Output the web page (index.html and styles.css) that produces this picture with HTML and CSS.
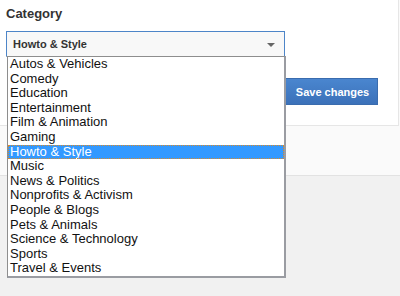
FILE: index.html
```html
<!DOCTYPE HTML>
<html>
<head>
<title>Category</title>
<link rel="stylesheet" href="styles.css">
</head>
<body>
<div class="page">
    <div class="card">
        <div class="label">Category</div>
        <div class="field">
            <div class="select">
                <span>Howto &amp; Style</span>
                <span class="arrow"></span>
            </div>
            <ul class="options">
                <li>Autos &amp; Vehicles</li>
                <li>Comedy</li>
                <li>Education</li>
                <li>Entertainment</li>
                <li>Film &amp; Animation</li>
                <li>Gaming</li>
                <li class="selected">Howto &amp; Style</li>
                <li>Music</li>
                <li>News &amp; Politics</li>
                <li>Nonprofits &amp; Activism</li>
                <li>People &amp; Blogs</li>
                <li>Pets &amp; Animals</li>
                <li>Science &amp; Technology</li>
                <li>Sports</li>
                <li>Travel &amp; Events</li>
            </ul>
        </div>
        <div class="actions">
            <button class="save">Save changes</button>
        </div>
    </div>
</div>
<div class="below"></div>
</body>
</html>
```
FILE: styles.css
```css
html, body {
    height: 100%;
}

body {
    margin: 0;
    display: flex;
    flex-direction: column;
    background: #f1f1f1;
    font-family: "Liberation Sans", Arial, sans-serif;
}

.page {
    position: relative;
    z-index: 1;
    flex: none;
    height: 175px;
    background: #fafafa;
    border-bottom: 1px solid #e2e2e2;
}

.below {
    flex: 1;
    background: #f1f1f1;
}

.card {
    box-sizing: border-box;
    width: 399px;
    height: 126px;
    padding: 5px 0 0 6px;
    background: #fff;
    border-right: 1px solid #e6e6e6;
    border-bottom: 1px solid #e6e6e6;
}

.label {
    font-size: 13px;
    font-weight: bold;
    color: #333;
    line-height: 16px;
    margin-top: 1px;
}

.field {
    position: relative;
    width: 279px;
    margin-top: 9px;
}

.select {
    box-sizing: border-box;
    height: 26px;
    display: flex;
    align-items: center;
    justify-content: space-between;
    padding: 0 9px 0 6px;
    background: #f8f8f8;
    border: 1px solid #4d85c8;
    border-bottom-color: #c9c9c9;
    font-size: 11px;
    font-weight: bold;
    color: #333;
}

.arrow {
    width: 0;
    height: 0;
    border-left: 4px solid transparent;
    border-right: 4px solid transparent;
    border-top: 4px solid #666;
    margin-top: 1px;
}

.options {
    position: absolute;
    top: 25px;
    left: 1px;
    width: 276px;
    margin: 0;
    padding: 0;
    list-style: none;
    background: #fff;
    border: 1px solid #8e8e8e;
    border-right: 2px solid #9a9ca2;
    border-bottom: 2px solid #9a9ca2;
    font-size: 13px;
    color: #111;
    z-index: 2;
}

.options li {
    height: 14.6px;
    line-height: 14.6px;
    padding-left: 2px;
    white-space: nowrap;
}

.options li.selected {
    background: #3399ff;
    color: #fff;
    outline: 1px dotted #d98a2a;
    outline-offset: -1px;
}

.actions {
    padding: 21px 0 0 275px;
}

.save {
    width: 97px;
    height: 27px;
    padding: 0 0 0 6px;
    background: linear-gradient(#4a86cf, #3b71b9);
    border: 1px solid #3a6cae;
    color: #fff;
    font-family: "Liberation Sans", Arial, sans-serif;
    font-size: 11px;
    font-weight: bold;
}
```
